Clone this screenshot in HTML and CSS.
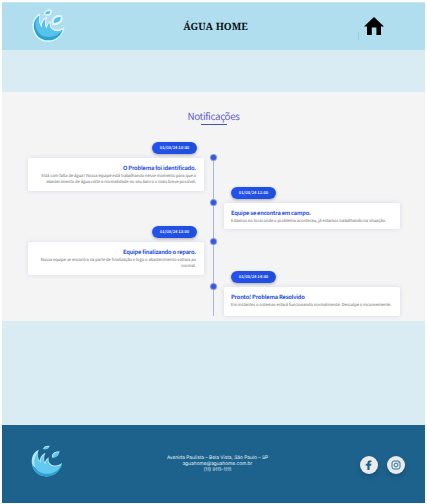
FILE: index.html
```html
<!DOCTYPE html>
<html lang="pt-BR">
<head>
<meta charset="utf-8">
<title>Água Home</title>
<link rel="stylesheet" href="styles.css">
</head>
<body>
<div class="page">
  <header class="header">
    <svg class="logo" viewBox="94 27 102 102">
      <g class="outline">
        <path d="M121 42C105 48 97 67 100 86C104 110 122 124 145 124C169 124 187 108 193 83C183 92 166 93 158 86C152 81 150 74 152 65C146 68 142 74 140 81C136 72 137 62 142 51C130 56 125 66 124 76C117 66 116 53 121 42Z"/>
        <path d="M134 43Q133 35 142 31Q150 28 155 31Q155 46 146 46Q140 47 134 43Z"/>
        <path d="M159 74Q153 58 165 50Q176 43 186 48Q192 65 177 71Q169 75 159 74Z"/>
      </g>
      <path class="deep" d="M119 47C106 54 101 69 103 84C107 108 124 121 145 121C167 121 183 109 189 89C177 98 162 94 156 88C150 82 148 77 149 70C145 74 143 80 142 88C134 79 134 69 137 58C129 64 127 73 127 83C117 73 115 59 119 47Z"/>
      <path class="water" d="M119 47C109 54 105 66 109 82C115 105 132 112 148 111C165 110 180 103 189 89C177 98 162 94 156 88C150 82 148 77 149 70C145 74 143 80 142 88C134 79 134 69 137 58C129 64 127 73 127 83C117 73 115 59 119 47Z"/>
      <path class="water" d="M137 42Q137 36 143 34L152 34Q151 43 144 43ZM163 70Q160 59 169 54Q177 50 183 52Q184 62 175 66Z"/>
    </svg>
    <h1 class="brand">ÁGUA HOME</h1>
    <div class="home">
      <span class="tick"></span>
      <svg class="house" viewBox="0 0 20 18"><path d="M10 0 20 9.4H17V18H12.4V10.5H7.8V18H3V9.4H0Z"/></svg>
    </div>
  </header>
  <main class="main">
    <section class="notices">
      <h2 class="heading">Notificações</h2>
      <div class="timeline">
        <article class="item left">
          <time class="date">01/03/24 10:30</time>
          <div class="card"><h3>O Problema foi identificado.</h3><p>Está com falta de água? Nossa equipe está trabalhando nesse momento para que o<br>abastecimento de água volte a normalidade no seu bairro o mais breve possível.</p></div>
        </article>
        <article class="item right">
          <time class="date">01/03/24 11:00</time>
          <div class="card"><h3>Equipe se encontra em campo.</h3><p>Estamos no local onde o problema aconteceu, já estamos trabalhando na situação.</p></div>
        </article>
        <article class="item left">
          <time class="date">01/03/24 13:00</time>
          <div class="card"><h3>Equipe finalizando o reparo.</h3><p>Nossa equipe se encontra na parte de finalização e logo o abastecimento voltara ao<br>normal.</p></div>
        </article>
        <article class="item right">
          <time class="date">01/03/24 14:30</time>
          <div class="card"><h3>Pronto! Problema Resolvido</h3><p>Em instantes o sistemas estará funcionando normalmente. Desculpe o inconvemente.</p></div>
        </article>
      </div>
    </section>
  </main>
  <footer class="footer">
    <svg class="logo foot-logo" viewBox="94 27 102 102">
      <path class="pale" d="M121 42C105 48 97 67 100 86C104 110 122 124 145 124C169 124 187 108 193 83C183 92 166 93 158 86C152 81 150 74 152 65C146 68 142 74 140 81C136 72 137 62 142 51C130 56 125 66 124 76C117 66 116 53 121 42Z"/>
      <path class="deep" d="M100 85C104 110 122 124 145 124C169 124 187 108 193 87C177 110 124 122 100 85Z"/>
      <path class="light" d="M119 51C99 69 103 115 145 116C169 116 184 104 191 87C177 96 162 94 156 88C150 82 148 77 149 70C145 74 143 80 142 88C134 79 134 69 137 58C129 64 127 73 127 83C117 73 115 61 119 51Z"/>
      <path class="light" d="M136 41Q137 30 154 31Q152 42 136 41ZM163 68Q160 47 185 48Q184 64 163 68Z"/>
      <path class="shine" d="M136 39Q137 30 154 31M163 65Q161 48 185 48"/>
    </svg>
    <address class="contact">Avenida Paulista – Bela Vista, São Paulo – SP<br>aguahome@aguahome.com.br<br>(11) 9111-1111</address>
    <div class="socials">
      <span class="social"><svg viewBox="0 0 18 18"><path class="fb" d="M7.4 14V9.8H5.8V7.8H7.4V6.7Q7.4 4.4 9.8 4.4H11.4V6.3H10.4Q9.6 6.3 9.6 7V7.8H11.4L11.1 9.8H9.6V14Z"/></svg></span>
      <span class="social"><svg viewBox="0 0 18 18"><g class="ig"><rect x="5" y="5" width="8" height="8" rx="2"/><circle cx="9" cy="9" r="1.9"/></g><circle class="fb" cx="11.3" cy="6.7" r=".5"/></svg></span>
    </div>
  </footer>
</div>
</body>
</html>
```
FILE: styles.css
```css
* { box-sizing: border-box; }
body { margin: 0; background: #fff; font-family: "Noto Sans CJK JP", "Noto Sans", sans-serif; overflow: hidden; text-rendering: geometricPrecision; }
h1, h2, h3, p { margin: 0; }
.page { width: 423px; margin: 2px 2px 0; height: 501px; display: flex; flex-direction: column; background: #d9ecf3; }
.header { height: 48px; background: #b0deee; border-top: 1px solid #c5e6f1; display: grid; grid-template-columns: 1fr auto 1fr; align-items: center; padding: 0 41px 0 29px; }
.logo { width: 34px; height: 34px; display: block; margin-bottom: 1px; }
.outline { fill: #e3f5fb; stroke: #e3f5fb; stroke-width: 3; stroke-linejoin: round; }
.deep { fill: #2aa4cf; }
.water { fill: #55c3eb; }
.pale { fill: #b4e4f5; }
.light { fill: #61c9ef; }
.shine { fill: none; stroke: #c0e9f7; stroke-width: 3; }
.brand { font: bold 10px/14px "Noto Serif", "Liberation Serif", serif; color: #071014; white-space: nowrap; margin: 0 0 1px 16px; }
.home { display: flex; justify-content: flex-end; align-items: flex-end; gap: 5px; height: 27px; }
.tick { width: 1px; height: 8px; background: #a2cbd9; }
.house { width: 20px; height: 18px; margin-bottom: 5px; }
.main { height: 375px; padding-top: 42px; }
.notices { height: 229px; background: #f4f4f4; padding-top: 16px; }
.heading { position: relative; font-size: 9.9px; line-height: 16px; font-weight: 400; color: #655fc9; text-align: center; letter-spacing: -.38px; height: 34px; }
.heading::after { content: ""; position: absolute; left: 199px; top: 16px; width: 26px; height: 1px; background: #4655b8; }
.timeline { position: relative; display: grid; grid-template-rows: 45px 39px 45px 45px; }
.timeline::before { content: ""; position: absolute; left: 211px; top: 16px; width: 1px; height: 158px; background: #a9b5dd; }
.item { position: relative; display: flex; flex-direction: column; gap: 4px; width: 176px; }
.left { margin-left: 26px; align-items: flex-end; text-align: right; }
.right { margin-left: 222px; }
.item::after { content: ""; position: absolute; top: 13px; width: 5px; height: 5px; border-radius: 50%; background: #3558df; box-shadow: 0 0 0 1px #8193ea; }
.left::after { left: 183px; }
.right::after { left: -13px; }
.date { display: block; width: 45px; height: 12px; margin: 0 7px; border-radius: 6px; background: linear-gradient(90deg, #2551ed, #1f4fdc); box-shadow: 0 1px 3px rgba(0,0,0,.3); color: #fff; font-size: 4.2px; font-weight: 500; line-height: 12px; text-align: center; white-space: nowrap; }
.card { width: 100%; height: 35px; background: #fff; border-radius: 2px; box-shadow: 0 0 4px rgba(75,75,220,.16); padding: 5px 8px 5px 7px; white-space: nowrap; }
.right .card { height: 29px; }
.card h3 { font-size: 5.7px; line-height: 9px; font-weight: 700; color: #2c52e2; letter-spacing: -.2px; }
.card p { font-size: 4.1px; line-height: 6.4px; color: #666; margin-top: 1px; letter-spacing: -.03px; }
.footer { height: 78px; background: #1d628c; display: grid; grid-template-columns: 1fr auto 1fr; align-items: center; padding: 0 20px 0 28px; color: #e4f3fa; }
.foot-logo { width: 33px; height: 33px; margin-bottom: 6px; }
.contact { font: normal 4.8px/6.3px "Inter", sans-serif; text-align: center; white-space: nowrap; }
.socials { display: flex; justify-content: flex-end; gap: 9px; padding-top: 2px; }
.social { width: 18px; height: 18px; border-radius: 50%; background: #ecebec; box-shadow: 0 3px 5px rgba(0,30,50,.22); }
.social svg { display: block; width: 18px; height: 18px; }
.fb { fill: #17658b; }
.ig { fill: none; stroke: #28789d; stroke-width: 1; }
```
